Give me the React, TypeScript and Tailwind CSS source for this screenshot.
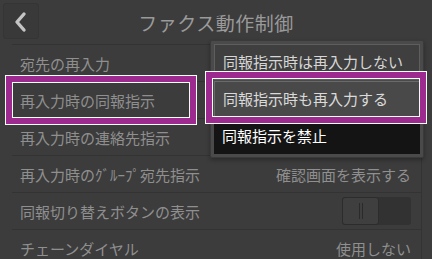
import React from 'react';

const rows = [
  { label: '宛先の再入力', value: '' },
  { label: '再入力時の同報指示', value: '' },
  { label: '再入力時の連絡先指示', value: '' },
  { label: '再入力時のｸﾞﾙｰﾌﾟ宛先指示', value: '確認画面を表示する' },
  { label: '同報切り替えボタンの表示', value: 'toggle' },
  { label: 'チェーンダイヤル', value: '使用しない' },
];

const Toggle: React.FC = () => (
  <div className="flex h-[28px] w-[69px] rounded-[3px] bg-[#323232]">
    <div className="flex w-[37px] items-center justify-center gap-[2px] rounded-[3px] border border-[#2c2c2c] bg-[#3f3f3f]">
      <span className="h-[16px] w-px bg-[#2a2a2a]" />
      <span className="h-[16px] w-px bg-[#2a2a2a]" />
    </div>
  </div>
);

// purple callout frame: white / purple / white
const Callout: React.FC<{ className: string }> = ({ className }) => (
  <div className={`pointer-events-none absolute border border-white ${className}`}>
    <div className="h-full w-full border-[6px] border-[#9d2a8e]">
      <div className="h-full w-full border border-white" />
    </div>
  </div>
);

const App: React.FC = () => {
  return (
    <div className="relative h-[259px] w-[432px] overflow-hidden bg-[#3c3c3c] font-['Noto_Sans_CJK_JP',sans-serif]">
      {/* header */}
      <div className="relative flex h-[44px] items-center justify-center">
        <button className="absolute left-[3px] top-[3px] flex h-[36px] w-[36px] rounded-[3px] border border-[#353535] bg-[#393939]">
          <svg width="36" height="36" viewBox="0 0 36 36" className="-m-px">
            <polyline points="21,11 14,19 21,27" fill="none" stroke="#c4c4c4" strokeWidth="3.4" strokeLinecap="round" strokeLinejoin="round" />
          </svg>
        </button>
        <h1 className="text-[19px] leading-none tracking-[0.5px] text-[#9a9a9a]">ファクス動作制御</h1>
      </div>

      {/* settings list */}
      <div className="ml-[12px] flex w-[410px] flex-col border-r border-[#333]">
        {rows.map((r) => (
          <div key={r.label} className="flex h-[37px] shrink-0 items-center justify-between border-t border-[#333] pl-[8px] pr-[10px]">
            <span className="text-[15px] leading-none text-[#8f8f8f]">{r.label}</span>
            {r.value === 'toggle' ? (
              <Toggle />
            ) : (
              <span className="text-[15px] leading-none text-[#8f8f8f]">{r.value}</span>
            )}
          </div>
        ))}
      </div>

      {/* dropdown menu */}
      <div className="absolute left-[210px] top-[40px] flex w-[214px] flex-col gap-px rounded-[2px] border border-[#3a3a3a] bg-[#4a4a4a] p-[3px] shadow-[0_2px_4px_rgba(0,0,0,0.3)]">
        <div className="flex h-[36px] items-center border border-[#5e5e5e] bg-[#3f3f3f] pl-[8px] text-[15px] text-[#d6d6d6]">
          同報指示時は再入力しない
        </div>
        <div className="flex h-[36px] items-center border border-[#6a6a6a] bg-[#494949] pl-[8px] text-[15px] text-[#dadada]">
          同報指示時も再入力する
        </div>
        <div className="flex h-[36px] items-center bg-[#141414] pl-[8px] text-[15px] text-white">
          同報指示を禁止
        </div>
      </div>

      <Callout className="left-[5px] top-[75px] h-[50px] w-[192px]" />
      <Callout className="left-[205px] top-[71px] h-[53px] w-[222px]" />
    </div>
  );
};

export default App;
